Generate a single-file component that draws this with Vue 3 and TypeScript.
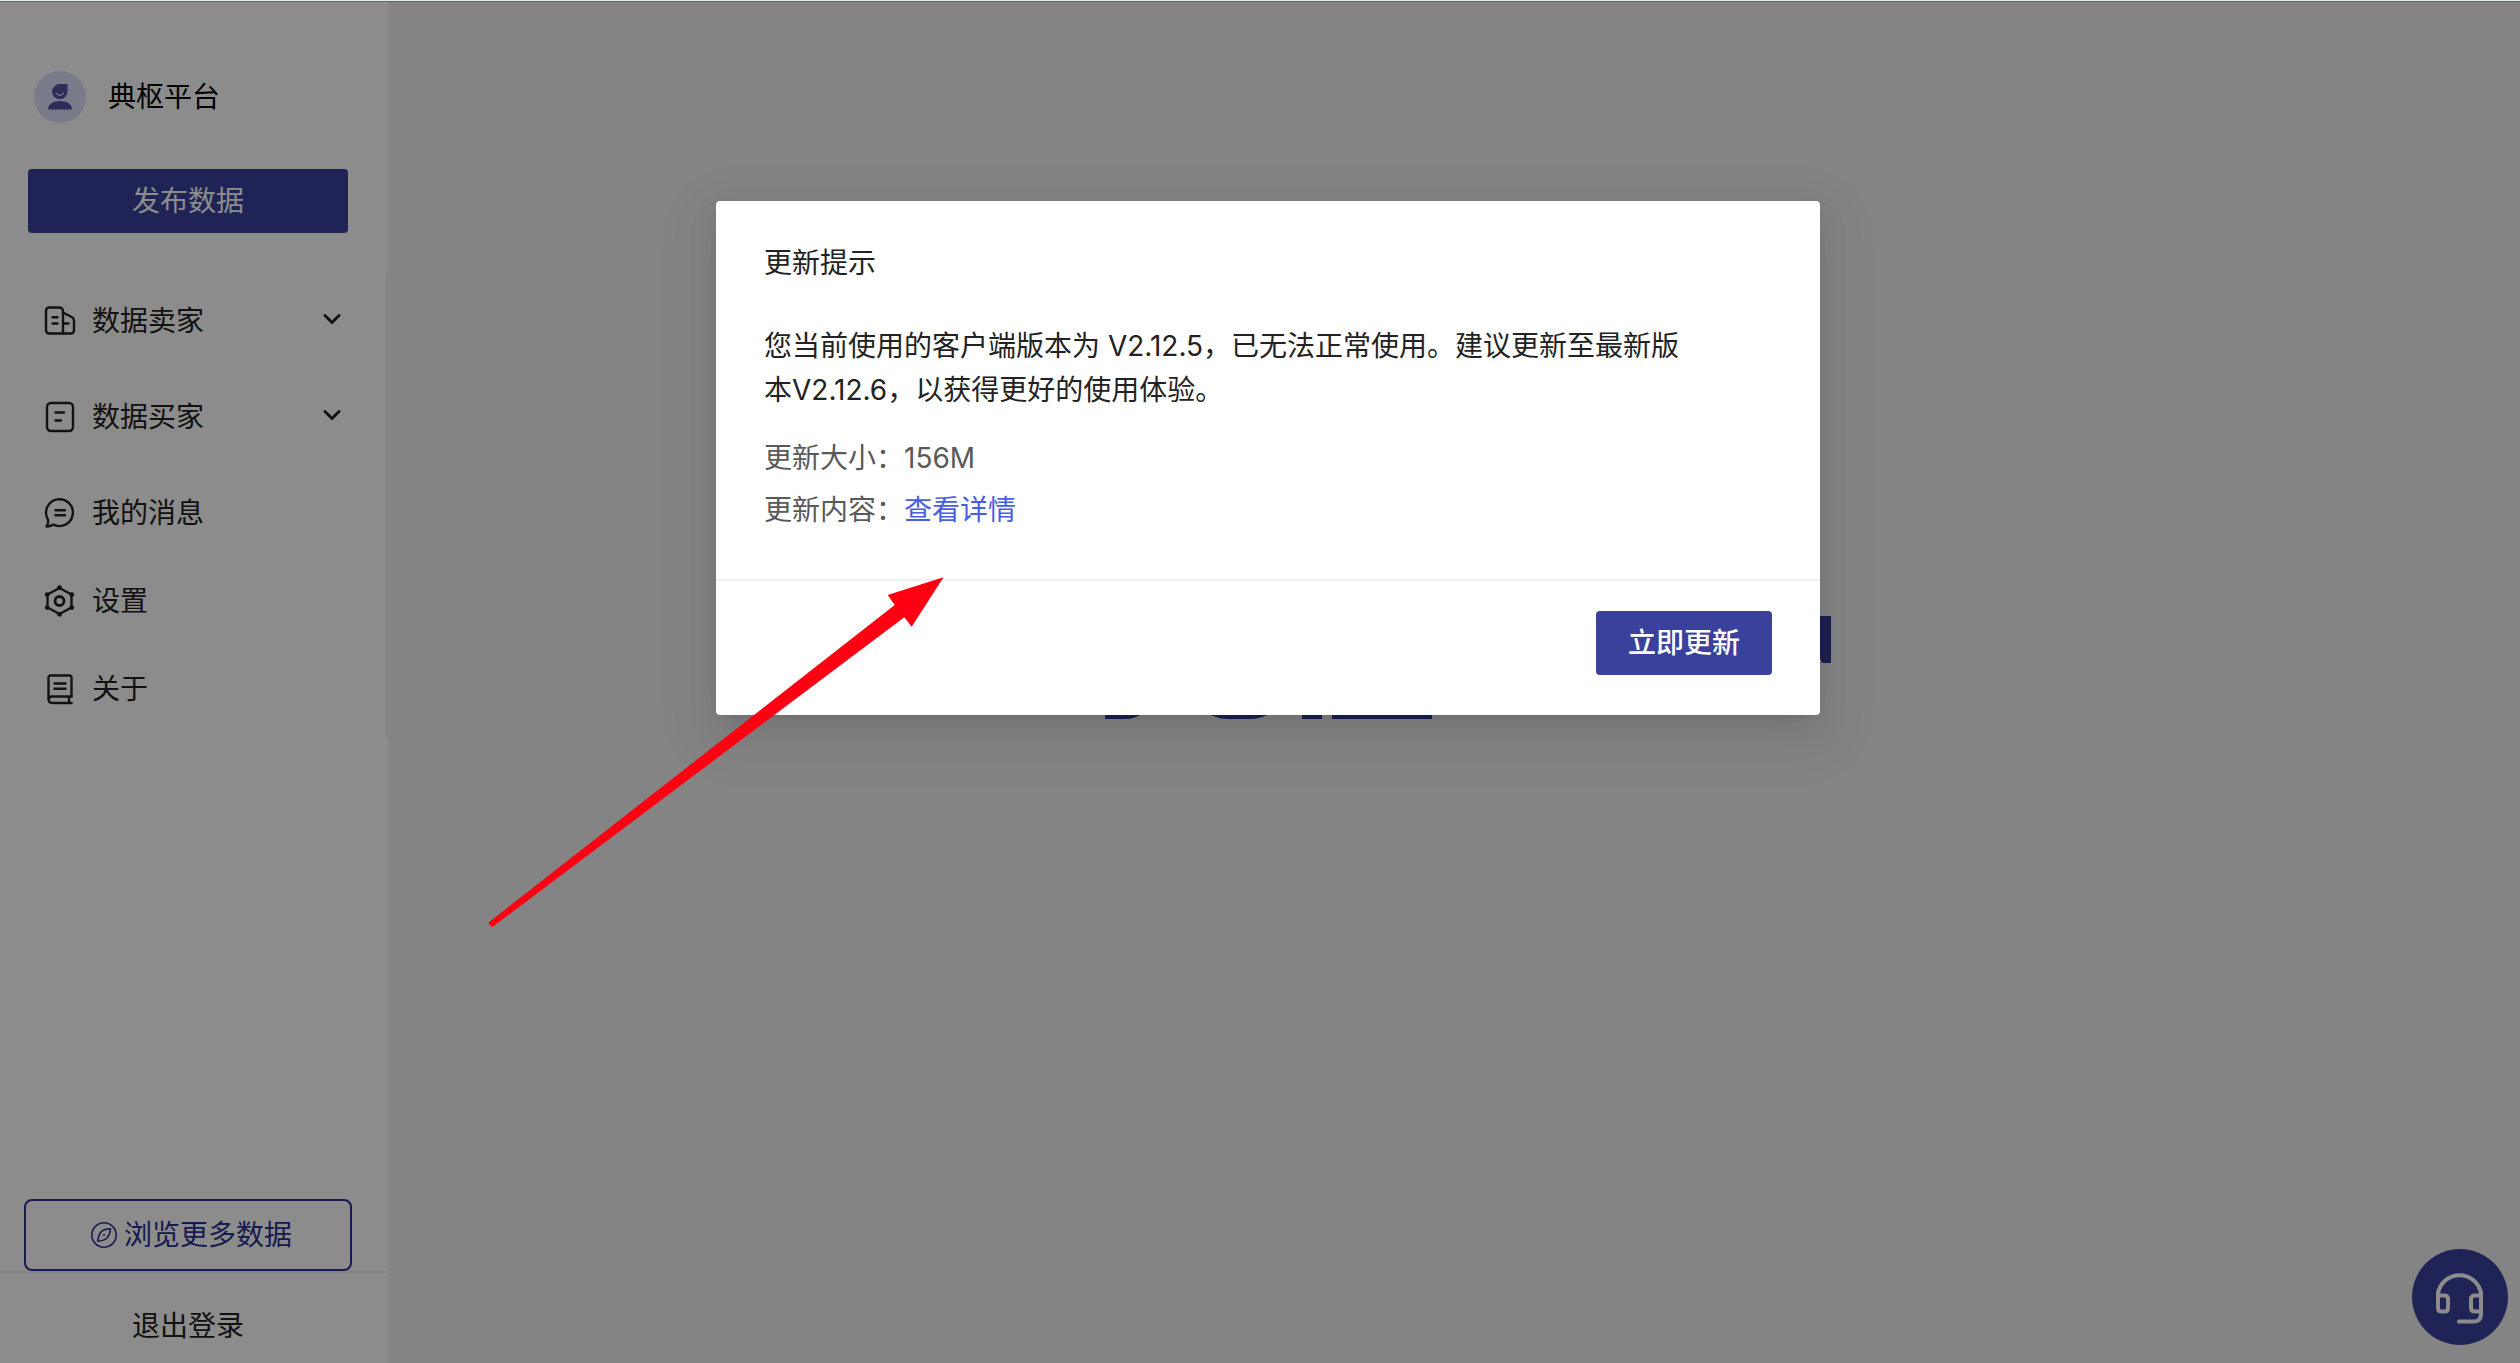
<script setup lang="ts">
interface MenuEntry {
  key: string
  label: string
  expandable: boolean
}

const menu: MenuEntry[] = [
  { key: 'seller', label: '数据卖家', expandable: true },
  { key: 'buyer', label: '数据买家', expandable: true },
  { key: 'message', label: '我的消息', expandable: false },
  { key: 'setting', label: '设置', expandable: false },
  { key: 'about', label: '关于', expandable: false },
]
</script>

<template>
  <div class="app">
    <aside class="sidebar">
      <header class="account">
        <svg class="avatar" viewBox="0 0 52 52" aria-hidden="true">
          <circle cx="26" cy="26" r="26" fill="#dfe1fb" />
          <path d="M18 20.500A7.800 7.800 0 0 1 25.800 13H33.500V20.500A7.750 7.750 0 0 1 18 20.500Z" fill="#51559f" />
          <path d="M14 38.500C14 33 19 30 26 30S38 33 38 38.500Z" fill="#51559f" />
          <path d="M22 22.200Q25.800 26.500 29.600 22.200" fill="none" stroke="#dfe1fb" stroke-width="1.200" stroke-linecap="round" />
        </svg>
        <span class="name">典枢平台</span>
      </header>
      <button class="publish" type="button">发布数据</button>

      <nav class="menu">
        <a v-for="item in menu" :key="item.key" href="#" class="item" :class="{ sub: item.expandable }">
          <svg class="icon" viewBox="0 0 32 32" aria-hidden="true">
            <g v-if="item.key === 'seller'">
              <path d="M5.500 2.500H15Q19 2.500 19 6.500V28.500H5.500Q2 28.500 2 25V6Q2 2.500 5.500 2.500Z" />
              <path d="M19 7.500L28 12.200Q30 13.300 30 15.500V25Q30 28.500 26.500 28.500H19" />
              <path d="M8.500 12.200H13.500M8.500 18.500H13.500M20 18.500H24.500" />
            </g>
            <g v-else-if="item.key === 'buyer'">
              <rect x="3" y="2" width="26" height="28" rx="4" />
              <path d="M11.500 11.500H20M11.500 19.500H17" />
            </g>
            <g v-else-if="item.key === 'message'">
              <path d="M2.500 29.500Q5 25.500 3.700 22A13.400 13.400 0 1 1 9.500 27.600Q6 29.500 2.500 29.500Z" />
              <path d="M11.500 13.200H21M11.500 18.200H21" />
            </g>
            <g v-else-if="item.key === 'setting'">
              <path d="M15.500 3L27.500 9.500V22.500L15.500 29L3.500 22.500V9.500Z" />
              <circle cx="15.500" cy="16" r="4.500" stroke-width="2.800" />
              <g fill="currentColor" stroke="none">
                <circle cx="15.500" cy="2.700" r="2.400" />
                <circle cx="15.500" cy="29.300" r="2.400" />
                <circle cx="27.800" cy="9.600" r="2.400" />
                <circle cx="27.800" cy="22.600" r="2.400" />
                <circle cx="3.200" cy="9.600" r="2.400" />
                <circle cx="3.200" cy="22.600" r="2.400" />
              </g>
            </g>
            <g v-else>
              <path d="M27.500 23.500V4.500Q27.500 2.500 25.500 2.500H6.500Q4.500 2.500 4.500 4.500V26Q4.500 30 8.500 30H27.500" />
              <path d="M5 25.500Q5.500 23.500 8 23.500H27.500M25 23.500V29.500" />
              <path d="M10.500 10.500H21.500M10.500 15.800H21.500" />
            </g>
          </svg>
          <span class="label">{{ item.label }}</span>
          <svg v-if="item.expandable" class="chevron" viewBox="0 0 18 12" aria-hidden="true">
            <path d="M2 2.500L9 9.500L16 2.500" />
          </svg>
        </a>
      </nav>

      <footer class="bottom">
        <div class="browse-wrap">
          <button class="browse" type="button">
            <svg class="compass" viewBox="0 0 28 28" aria-hidden="true">
              <circle cx="14" cy="14" r="12.200" />
              <path d="M20.500 7.800Q13.500 8 10.500 11.500Q8.500 14.500 7.800 20.200Q14 20 17.500 16.500Q20 13 20.500 7.800Z" />
              <circle cx="14" cy="14" r="1" class="dot" />
            </svg>
            <span>浏览更多数据</span>
          </button>
        </div>
        <button class="logout" type="button">退出登录</button>
      </footer>
    </aside>

    <main class="content">
      <svg class="wordmark" viewBox="0 0 726 104" aria-hidden="true">
        <path d="M0 90H45Q36 104 20 104H0Z" />
        <path d="M92 90H174Q162 104 146 104H124Q106 104 92 90Z" />
        <rect x="197" y="80" width="20" height="24" />
        <rect x="227" y="84" width="100" height="20" />
        <path d="M690 1H726V48H717L704 18Z" />
      </svg>
    </main>

    <button class="support" type="button" aria-label="客服">
      <svg viewBox="0 0 96 96" aria-hidden="true">
        <path d="M26 45A21.700 21.700 0 0 1 69 45" />
        <path d="M26 43V59Q26 62.500 29.500 62.500H32.500Q36 62.500 36 59V50Q36 46.500 32.500 46.500H26" />
        <path d="M69 46.500H63Q59 46.500 59 50V59Q59 62.500 63 62.500H69M69 43V65Q69 72.500 61.500 72.500H47" />
      </svg>
    </button>

    <div class="mask">
      <section class="modal" role="dialog" aria-labelledby="update-title">
        <div class="body">
          <h2 id="update-title">更新提示</h2>
          <p class="message">您当前使用的客户端版本为 V2.12.5，已无法正常使用。建议更新至最新版本V2.12.6，以获得更好的使用体验。</p>
          <p class="detail">更新大小：156M</p>
          <p class="detail">更新内容：<a href="#">查看详情</a></p>
        </div>
        <div class="actions">
          <button class="update" type="button">立即更新</button>
        </div>
      </section>
    </div>

    <svg class="arrow" viewBox="0 0 456 350" aria-hidden="true">
      <path d="M455.500 0.300L399.700 18L406.700 28L0.300 345.700L4 350.300L416.300 40.300L423.700 49.700Z" />
    </svg>
  </div>
</template>

<style>
body {
  margin: 0;
}
</style>

<style scoped>
.app {
  position: relative;
  display: flex;
  box-sizing: border-box;
  min-height: 100vh;
  overflow: hidden;
  border-top: 1px solid #e6eee8;
  background: #f0f0f0;
  font-family: Inter, "Noto Sans CJK SC", sans-serif;
  font-size: 28px;
  line-height: 44px;
  color: #222;
}
button {
  padding: 0;
  border: 0;
  background: none;
  color: inherit;
  font: inherit;
  cursor: pointer;
}
a {
  text-decoration: none;
}
svg {
  display: block;
  flex: none;
}
.sidebar {
  display: flex;
  flex-direction: column;
  flex: none;
  width: 388px;
  background: #fff;
}
.account {
  display: flex;
  align-items: center;
  gap: 22px;
  padding: 70px 34px 46px;
  color: #000;
}
.avatar {
  width: 52px;
  height: 52px;
}
.publish {
  height: 64px;
  margin: 0 40px 40px 28px;
  border-radius: 4px;
  background: #3a419c;
  color: #fff;
}
.menu {
  border-right: 2px solid #f0f0f0;
}
.item {
  display: flex;
  align-items: center;
  height: 80px;
  margin: 8px 0;
  padding: 0 45px 0 44px;
  color: #222;
}
.item.sub {
  height: 96px;
  margin: 0;
}
.icon {
  width: 32px;
  height: 32px;
  margin-right: 16px;
}
.icon,
.chevron {
  fill: none;
  stroke: currentColor;
  stroke-width: 2.4;
  stroke-linecap: round;
  stroke-linejoin: round;
}
.chevron {
  width: 18px;
  height: 12px;
  margin: 0 0 4px auto;
  stroke-width: 3;
}
.bottom {
  margin-top: auto;
}
.browse-wrap {
  padding: 0 36px 0 24px;
  border-bottom: 2px solid #f0f0f0;
}
.browse {
  display: flex;
  align-items: center;
  justify-content: center;
  gap: 6px;
  box-sizing: border-box;
  width: 100%;
  height: 72px;
  padding-left: 6px;
  border: 2px solid #2b3190;
  border-radius: 8px;
  color: #2b3190;
}
.compass {
  width: 28px;
  height: 28px;
  fill: none;
  stroke: currentColor;
  stroke-width: 1.6;
  stroke-linejoin: round;
}
.compass .dot {
  fill: currentColor;
  stroke: none;
}
.logout {
  display: block;
  width: 100%;
  height: 90px;
  padding: 16px 12px 0 0;
}
.content {
  display: flex;
  flex: 1;
  justify-content: center;
  padding: 614px 0 0 28px;
}
.wordmark {
  width: 726px;
  height: 104px;
  fill: #363d92;
}
.support {
  position: absolute;
  right: 12px;
  bottom: 18px;
  width: 96px;
  height: 96px;
  border-radius: 50%;
  background: #3a419c;
}
.support svg {
  fill: none;
  stroke: #fff;
  stroke-width: 4;
  stroke-linecap: round;
  stroke-linejoin: round;
}
.mask {
  position: absolute;
  inset: 0;
  display: flex;
  align-items: flex-start;
  justify-content: center;
  padding: 199px 0 0 16px;
  border-top: 1px solid #626862;
  background: rgba(0, 0, 0, 0.45);
}
.modal {
  width: 1104px;
  border-radius: 4px;
  background: #fff;
  box-shadow: 0 6px 12px -8px rgba(0, 0, 0, 0.12), 0 12px 32px rgba(0, 0, 0, 0.08), 0 18px 56px 16px rgba(0, 0, 0, 0.05);
}
.body {
  padding: 40px 136px 39px 48px;
  border-bottom: 2px solid #f0f0f0;
}
h2 {
  margin: 0 0 39px;
  font-size: 28px;
  font-weight: 400;
}
.message {
  margin: 0 0 24px;
}
.detail {
  margin: 0 0 8px;
  color: #595959;
}
.detail a {
  color: #4860e0;
}
.actions {
  display: flex;
  justify-content: flex-end;
  padding: 30px 48px 40px;
}
.update {
  width: 176px;
  height: 64px;
  border-radius: 4px;
  background: #3a419c;
  color: #fff;
  font-weight: 500;
}
.arrow {
  position: absolute;
  top: 576px;
  left: 488px;
  width: 456px;
  height: 350px;
  overflow: visible;
  fill: #ff0012;
  pointer-events: none;
}
</style>
